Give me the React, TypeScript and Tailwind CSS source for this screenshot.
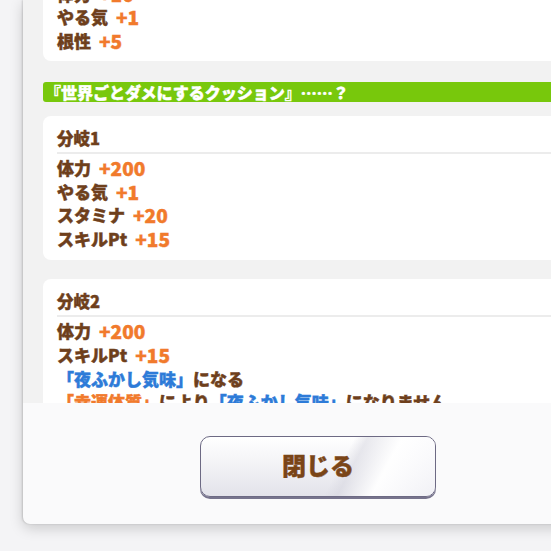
import React from "react";

// Event choice result dialog (scrolled part + close button)

type Seg = { t: string; c: "b" | "o" | "u" };

const BROWN = "text-[#6e3f1c]";

function Line({ segs }: { segs: Seg[] }) {
  return (
    <div className="h-[23.5px] whitespace-nowrap leading-[23.5px]">
      {segs.map((s, i) => (
        <span
          key={i}
          className={s.c === "o" ? "text-[#f17a2c]" : s.c === "u" ? "text-[#2d7bd8]" : BROWN}
        >
          {s.t}
        </span>
      ))}
    </div>
  );
}

function Stat({ name, value }: { name: string; value: string }) {
  return (
    <div className="flex h-[23.5px] items-center whitespace-nowrap">
      <span className={`leading-[20px] ${BROWN}`}>{name}</span>
      <span className="ml-[8px] text-[19px] leading-[20px] text-[#f17a2c]">{value}</span>
    </div>
  );
}

function BranchCard({ title, children }: { title: string; children: React.ReactNode }) {
  return (
    <div className="rounded-[8px] bg-white pl-[14px] pt-[12px] pb-[9px]">
      <div className={`h-[20px] text-[16.5px] leading-[20px] ${BROWN}`}>{title}</div>
      <div className="mt-[4px] h-[2px] bg-[#ececec]" />
      <div className="mt-[3px] text-[17px]">{children}</div>
    </div>
  );
}

export default function App() {
  return (
    <div
      className="h-[551px] w-[551px] overflow-hidden bg-[#f4f4f6] font-black [-webkit-text-stroke:0.45px]"
      style={{ fontFamily: '"Noto Sans CJK JP", "Noto Sans", sans-serif' }}
    >
      <div className="ml-[23px] flex h-[524px] w-[590px] flex-col overflow-hidden rounded-b-[7px] bg-[#fafafb] shadow-[0_4px_14px_rgba(0,0,0,0.18),-1px_0_2px_rgba(0,0,0,0.14)]">
        {/* scroll area */}
        <div className="flex h-[403px] shrink-0 flex-col overflow-hidden bg-[#f2f2f2] pl-[20px]">
          <div className="-mt-[18px] rounded-b-[8px] bg-white pl-[14px] pb-[8px] text-[17px]">
            <Stat name="体力" value="+10" />
            <Stat name="やる気" value="+1" />
            <Stat name="根性" value="+5" />
          </div>

          <div className="mt-[21px] h-[20px] rounded-l-[3px] bg-[#78c80c] pl-[2px] text-[16px] leading-[20px] text-white">
            『世界ごとダメにするクッション』……？
          </div>

          <div className="mt-[14px]">
            <BranchCard title="分岐1">
              <Stat name="体力" value="+200" />
              <Stat name="やる気" value="+1" />
              <Stat name="スタミナ" value="+20" />
              <Stat name="スキルPt" value="+15" />
            </BranchCard>
          </div>

          <div className="mt-[19px]">
            <BranchCard title="分岐2">
              <Stat name="体力" value="+200" />
              <Stat name="スキルPt" value="+15" />
              <Line
                segs={[
                  { t: "「夜ふかし気味」", c: "u" },
                  { t: "になる", c: "b" },
                ]}
              />
              <Line
                segs={[
                  { t: "「幸運体質」", c: "o" },
                  { t: "により", c: "b" },
                  { t: "「夜ふかし気味」", c: "u" },
                  { t: "になりません", c: "b" },
                ]}
              />
            </BranchCard>
          </div>
        </div>

        {/* footer */}
        <div className="flex flex-1 justify-center pt-[33px]">
          <button className="relative h-[61px] w-[236px] overflow-hidden rounded-[10px] border-[1.5px] border-[#6d6a84] bg-[linear-gradient(180deg,#ffffff_0%,#f3f3f6_45%,#e3e3ea_100%)] shadow-[0_2px_0_#77748d]">
            <span className="absolute inset-0 bg-[linear-gradient(118deg,rgba(255,255,255,0)_0%,rgba(255,255,255,0)_58%,rgba(215,215,224,0.55)_63%,rgba(255,255,255,0.95)_76%,rgba(246,246,250,0.7)_100%)]" />
            <span className="relative text-[24px] leading-none text-[#7a4517]">閉じる</span>
          </button>
        </div>
      </div>
    </div>
  );
}
